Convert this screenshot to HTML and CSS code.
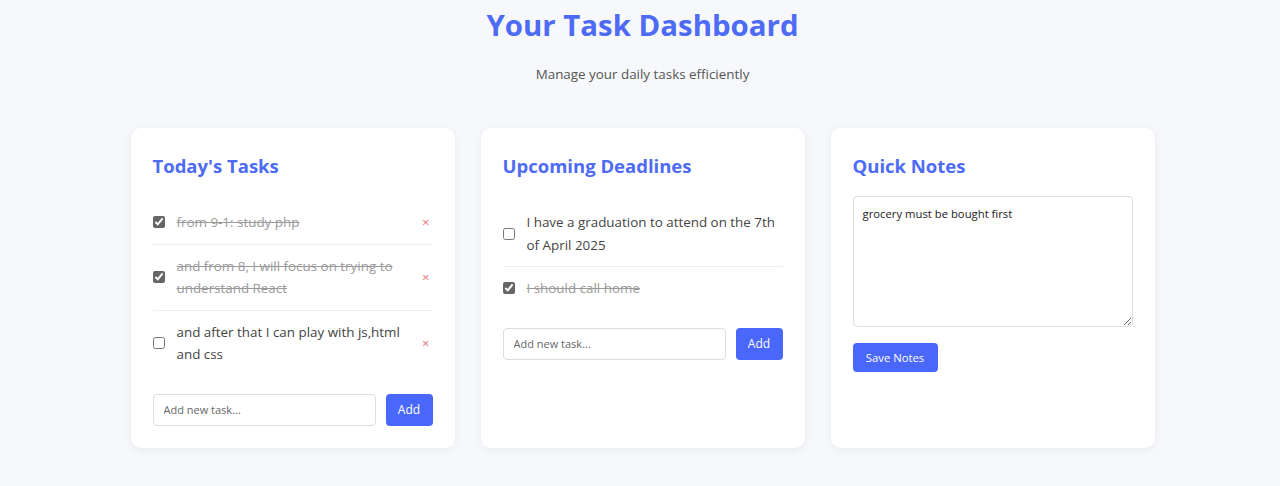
FILE: index.html
```html
<!DOCTYPE html>
<html lang="en">
<head>
<meta charset="utf-8">
<title>Task Dashboard</title>
<link rel="stylesheet" href="styles.css">
</head>
<body>
<header class="header">
  <h1 class="title">Your Task Dashboard</h1>
  <p class="subtitle">Manage your daily tasks efficiently</p>
</header>
<main class="board">
  <section class="card">
    <h2 class="card-title">Today's Tasks</h2>
    <ul class="task-list">
      <li class="task done">
        <input type="checkbox" class="check" checked>
        <span class="task-text">from 9-1: study php</span>
        <button class="del">×</button>
      </li>
      <li class="task done">
        <input type="checkbox" class="check" checked>
        <span class="task-text">and from 8, I will focus on trying to understand React</span>
        <button class="del">×</button>
      </li>
      <li class="task last">
        <input type="checkbox" class="check">
        <span class="task-text">and after that I can play with js,html and css</span>
        <button class="del">×</button>
      </li>
    </ul>
    <div class="add-row">
      <input type="text" class="add-input" placeholder="Add new task...">
      <button class="btn add-btn">Add</button>
    </div>
  </section>
  <section class="card">
    <h2 class="card-title">Upcoming Deadlines</h2>
    <ul class="task-list">
      <li class="task">
        <input type="checkbox" class="check">
        <span class="task-text">I have a graduation to attend on the 7th of April 2025</span>
      </li>
      <li class="task done last">
        <input type="checkbox" class="check" checked>
        <span class="task-text">I should call home</span>
      </li>
    </ul>
    <div class="add-row">
      <input type="text" class="add-input" placeholder="Add new task...">
      <button class="btn add-btn">Add</button>
    </div>
  </section>
  <section class="card">
    <h2 class="card-title">Quick Notes</h2>
    <textarea class="notes">grocery must be bought first</textarea>
    <button class="btn save-btn">Save Notes</button>
  </section>
</main>
</body>
</html>
```
FILE: styles.css
```css
* { box-sizing: border-box; }
html, body { margin: 0; }
body {
  background: #f7f8fb;
  font-family: "Open Sans", "Noto Sans", sans-serif;
  color: #444;
  padding-left: 5px;
  height: 486px;
  overflow: hidden;
}
.header { text-align: center; }
.title {
  margin: 0;
  padding-top: 4px;
  font-size: 29.4px;
  line-height: 42px;
  font-weight: 700;
  color: #4d6bf5;
}
.subtitle {
  margin: 17px 0 0;
  font-size: 13.4px;
  line-height: 22px;
  color: #555;
}
.board {
  display: grid;
  grid-template-columns: repeat(3, 324px);
  gap: 26px;
  justify-content: center;
  margin-top: 43px;
}
.card {
  background: #fff;
  border-radius: 10px;
  box-shadow: 0 2px 10px rgba(0,0,0,0.06);
  padding: 22px 22px;
  height: 320px;
}
.card-title {
  margin: 0 0 19px;
  font-size: 18.5px;
  line-height: 32px;
  font-weight: 700;
  color: #4d6bf5;
}
.task-list { list-style: none; margin: 0 0 18px; padding: 0; }
.task {
  display: flex;
  align-items: center;
  padding: 10px 0;
  border-bottom: 1px solid #eee;
  font-size: 13.4px;
  line-height: 22.5px;
}
.task.last { border-bottom: none; }
.check {
  margin: 0 12px 0 0;
  width: 12px;
  height: 12px;
  flex: none;
  accent-color: #666;
}
.task-text { flex: 1; color: #444; }
.task.done .task-text { text-decoration: line-through; color: #9a9a9a; }
.del {
  border: none;
  background: none;
  color: #e57373;
  font-size: 13px;
  padding: 0 3px 0 5px;
  cursor: pointer;
  font-family: inherit;
}
.add-row { display: flex; gap: 10px; }
.add-input {
  flex: 1;
  height: 32px;
  border: 1px solid #ddd;
  border-radius: 4px;
  padding: 0 10px;
  font-size: 11px;
  font-family: inherit;
  color: #444;
}
.add-input::placeholder { color: #666; }
.btn {
  background: #4a67fb;
  color: #fff;
  border: none;
  border-radius: 4px;
  font-family: inherit;
  cursor: pointer;
}
.add-btn { width: 47px; height: 32px; font-size: 12px; }
.notes {
  display: block;
  width: 100%;
  height: 131px;
  margin: -5px 0 16px;
  border: 1px solid #ddd;
  border-radius: 4px;
  padding: 9px 9px;
  font-family: inherit;
  font-size: 11.3px;
  color: #222;
  resize: vertical;
}
.save-btn { width: 85px; height: 29px; font-size: 11.3px; }
```
